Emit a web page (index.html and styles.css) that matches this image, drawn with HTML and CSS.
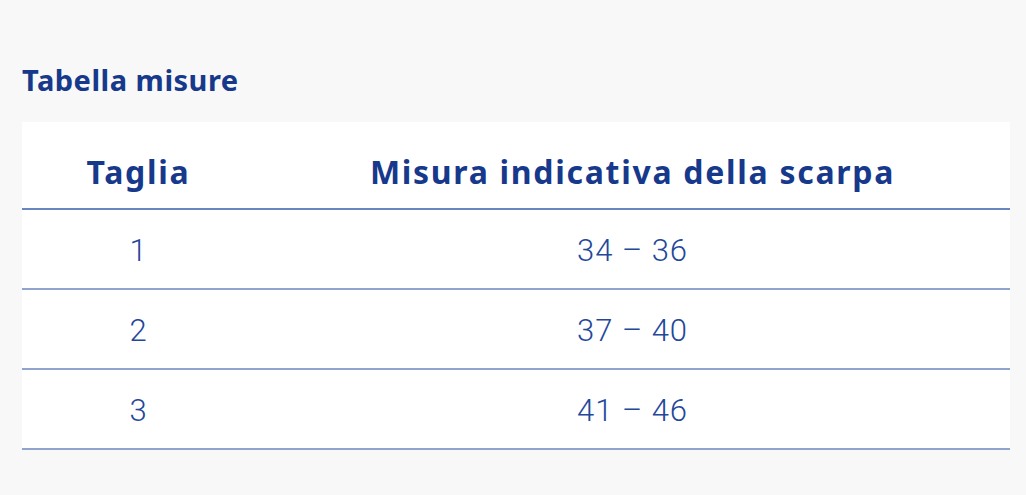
FILE: index.html
```html
<!DOCTYPE html>
<html lang="it">
<head>
<meta charset="utf-8">
<title>Tabella misure</title>
<link rel="stylesheet" href="styles.css">
</head>
<body>
<section class="sizes">
  <h2 class="sizes-title">Tabella misure</h2>
  <table class="size-table">
    <thead>
      <tr>
        <th class="col-size">Taglia</th>
        <th class="col-shoe">Misura indicativa della scarpa</th>
      </tr>
    </thead>
    <tbody>
      <tr><td>1</td><td>34 – 36</td></tr>
      <tr><td>2</td><td>37 – 40</td></tr>
      <tr><td>3</td><td>41 – 46</td></tr>
    </tbody>
  </table>
</section>
</body>
</html>
```
FILE: styles.css
```css
html, body {
  margin: 0;
  padding: 0;
  background: #f8f8f8;
}
body {
  font-family: "Noto Sans", "Liberation Sans", sans-serif;
  color: #1b3d8f;
}
.sizes {
  padding: 62px 16px 0 22px;
}
.sizes-title {
  margin: 0 0 24px 0;
  font-size: 29px;
  font-weight: 700;
  line-height: 36px;
  color: #17398c;
  letter-spacing: 0.5px;
}
.size-table {
  width: 988px;
  border-collapse: collapse;
  background: #ffffff;
}
.size-table th {
  height: 87px;
  padding: 12px 0 0 0;
  box-sizing: border-box;
  font-size: 32px;
  font-weight: 700;
  letter-spacing: 1.7px;
  color: #17398c;
  text-align: center;
  vertical-align: middle;
  border-bottom: 2px solid #6a86bf;
}
.size-table th.col-size {
  width: 233px;
}
.size-table td {
  height: 80px;
  padding: 3px 0 0 0;
  box-sizing: border-box;
  font-family: "Roboto", "Noto Sans", sans-serif;
  font-weight: 300;
  font-size: 31px;
  letter-spacing: 1px;
  color: #24479a;
  text-align: center;
  vertical-align: middle;
  border-bottom: 2px solid #8fa3cc;
}
```
